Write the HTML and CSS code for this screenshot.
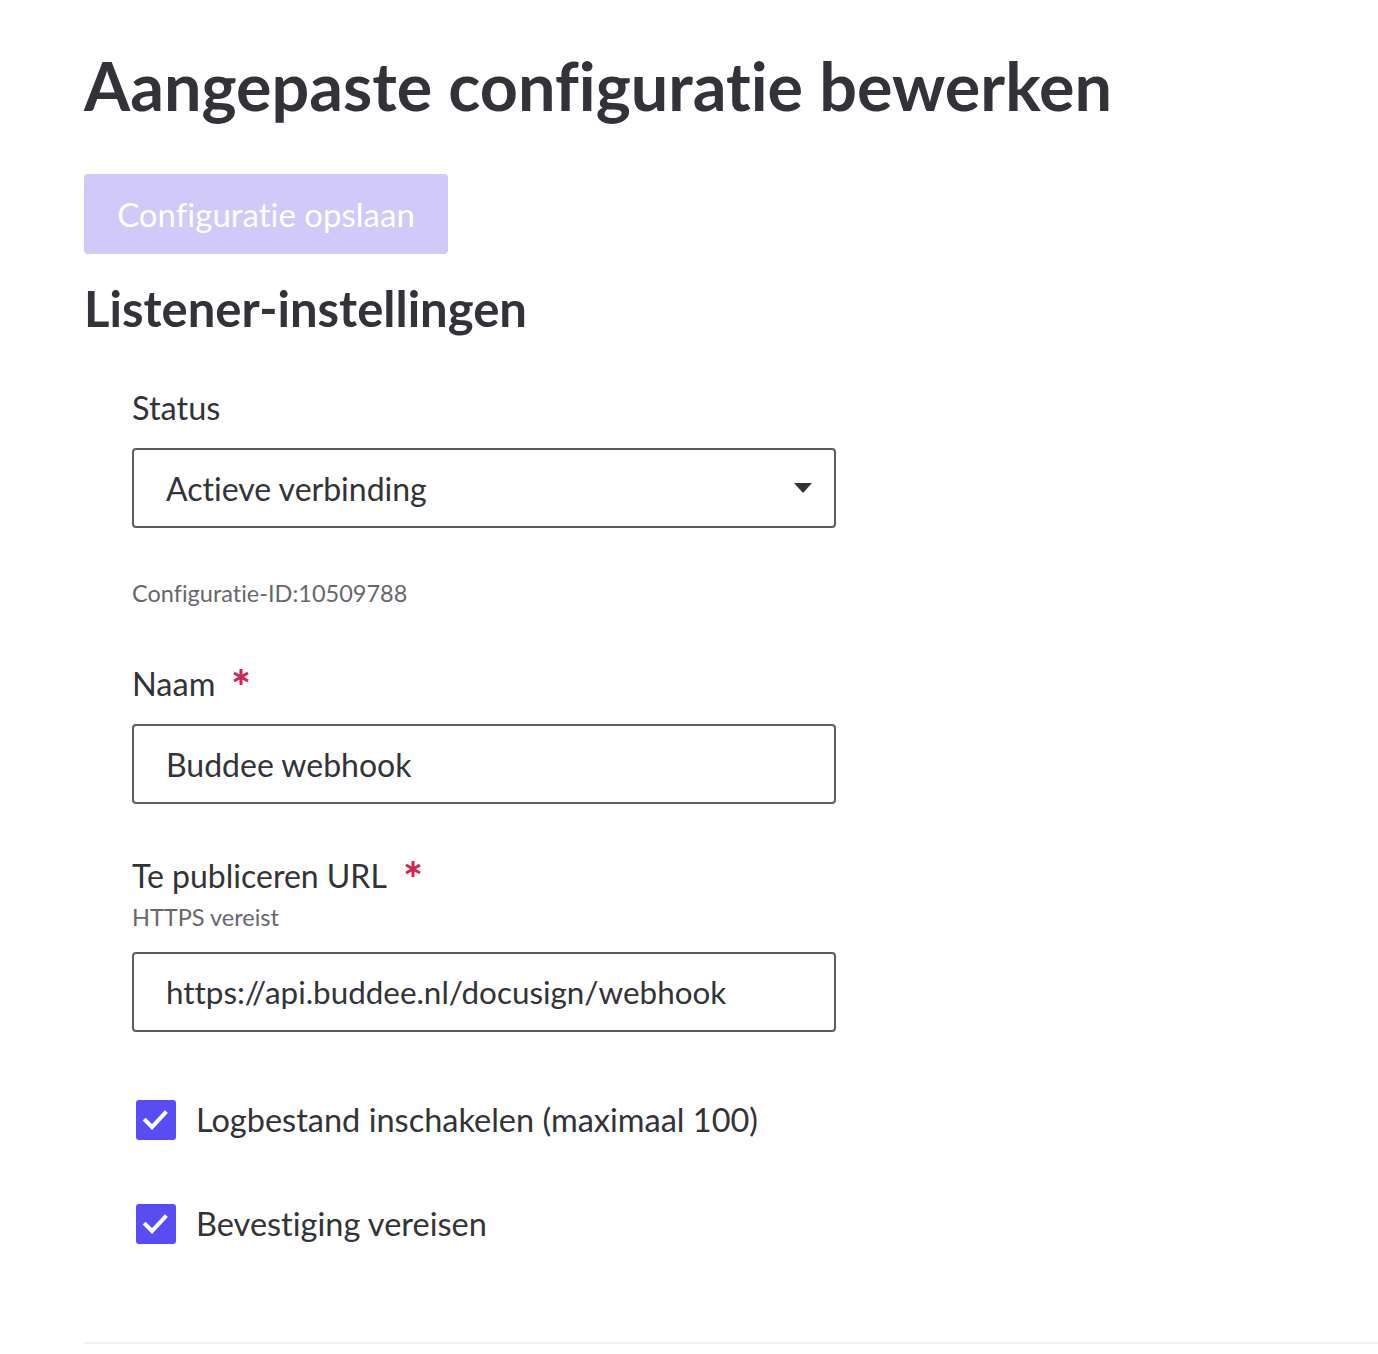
FILE: index.html
```html
<!DOCTYPE html>
<html lang="nl">
<head>
<meta charset="utf-8">
<title>Aangepaste configuratie bewerken</title>
<link rel="stylesheet" href="styles.css">
</head>
<body>
<main class="page">
  <h1 class="title">Aangepaste configuratie bewerken</h1>
  <button class="save-btn" type="button" disabled>Configuratie opslaan</button>
  <h2 class="section-title">Listener-instellingen</h2>

  <div class="form">
    <div class="field field-status">
      <label class="label">Status</label>
      <div class="select">
        <span class="select-value">Actieve verbinding</span>
        <svg class="caret" width="18" height="10" viewBox="0 0 18 10"><path d="M0 0 H18 L9 10 Z" fill="#323338"/></svg>
      </div>
    </div>

    <p class="config-id">Configuratie-ID:10509788</p>

    <div class="field field-name">
      <label class="label">Naam<svg class="req" width="16" height="18" viewBox="0 0 16 18"><path d="M8 1 V17 M1 5 L15 13 M1 13 L15 5" stroke="#d5254f" stroke-width="3" fill="none"/></svg></label>
      <div class="input">Buddee webhook</div>
    </div>

    <div class="field field-url">
      <label class="label">Te publiceren URL<svg class="req" width="16" height="18" viewBox="0 0 16 18"><path d="M8 1 V17 M1 5 L15 13 M1 13 L15 5" stroke="#d5254f" stroke-width="3" fill="none"/></svg></label>
      <p class="hint">HTTPS vereist</p>
      <div class="input">https://api.buddee.nl/docusign/webhook</div>
    </div>

    <div class="checks">
      <div class="check">
        <span class="box"><svg width="40" height="40" viewBox="0 0 40 40"><path d="M9.5 20.5 L16 27 L29 13" fill="none" stroke="#fff" stroke-width="4" stroke-linecap="square" stroke-linejoin="miter"/></svg></span>
        <span class="check-label">Logbestand inschakelen (maximaal 100)</span>
      </div>
      <div class="check">
        <span class="box"><svg width="40" height="40" viewBox="0 0 40 40"><path d="M9.5 20.5 L16 27 L29 13" fill="none" stroke="#fff" stroke-width="4" stroke-linecap="square" stroke-linejoin="miter"/></svg></span>
        <span class="check-label">Bevestiging vereisen</span>
      </div>
    </div>
  </div>
  <hr class="divider">
</main>
</body>
</html>
```

FILE: styles.css
```css
* { box-sizing: border-box; }
html, body { margin: 0; padding: 0; background: #fff; }
body {
  font-family: "Lato", "Noto Sans", sans-serif;
  color: #323338;
  font-variant-ligatures: none;
}
.page {
  padding: 0 0 0 84px;
  display: flex;
  flex-direction: column;
}
.title {
  margin: 44px 0 0 0;
  font-size: 66.5px;
  font-weight: 700;
  line-height: 82px;
}
.save-btn {
  margin-top: 48px;
  align-self: flex-start;
  width: 364px;
  height: 80px;
  border: none;
  border-radius: 4px;
  background: #d1c9f8;
  color: #fff;
  font-family: inherit;
  font-variant-ligatures: none;
  font-size: 33px;
  font-weight: 400;
  padding: 0;
}
.section-title {
  margin: 26px 0 0 0;
  font-size: 49px;
  font-weight: 700;
  line-height: 56px;
}
.form {
  padding-left: 48px;
  display: flex;
  flex-direction: column;
}
.field { display: flex; flex-direction: column; }
.field-status { margin-top: 52px; }
.label {
  font-size: 32.5px;
  line-height: 40px;
  font-weight: 400;
  display: flex;
  align-items: flex-start;
}
.req { margin-left: 18px; margin-top: 4px; }
.select, .input {
  width: 704px;
  height: 80px;
  border: 2px solid #5c5c63;
  border-radius: 4px;
  display: flex;
  align-items: center;
  padding: 0 32px;
  font-size: 32px;
}
.field-status .select { margin-top: 20px; }
.select { justify-content: space-between; padding-right: 22px; }
.config-id {
  margin: 50px 0 0 0;
  font-size: 23.5px;
  line-height: 30px;
  color: #66676c;
}
.field-name { margin-top: 56px; }
.field-name .input { margin-top: 20px; }
.field-url { margin-top: 52px; }
.field-url .label { font-size: 32px; }
.hint {
  margin: 6px 0 0 0;
  font-size: 23.5px;
  line-height: 30px;
  color: #66676c;
}
.field-url .input { margin-top: 20px; font-size: 31.4px; }
.checks {
  margin-top: 68px;
  display: flex;
  flex-direction: column;
  gap: 64px;
}
.check {
  display: flex;
  align-items: center;
  gap: 20px;
  padding-left: 4px;
}
.box {
  width: 40px;
  height: 40px;
  border-radius: 3px;
  background: #5a4cf5;
  display: flex;
}
.check-label { font-size: 32.5px; line-height: 40px; }
.divider {
  margin: 98px 0 0 0;
  border: none;
  height: 2px;
  background: #f1f1f2;
}
```
